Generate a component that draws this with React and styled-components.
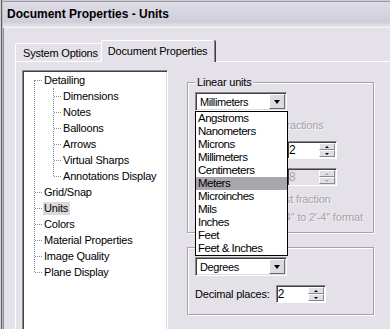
import React from 'react';
import styled, { createGlobalStyle } from 'styled-components';

const GlobalStyle = createGlobalStyle`
  html, body {
    margin: 0;
    padding: 0;
    height: 100%;
    overflow: hidden;
    background: #e5e1e8;
  }
  body {
    font-family: "Liberation Sans", Arial, sans-serif;
    font-size: 11px;
    letter-spacing: -0.2px;
    color: #000;
  }
`;

const Frame = styled.div`
  width: 390px;
  height: 329px;
  overflow: hidden;
  box-sizing: border-box;
  padding: 2px 0 0 3px;
  display: flex;
  flex-direction: column;
  background: #e5e1e8;
  box-shadow: inset 1px 0 #d2d0d6, inset 2px 0 #5f5d66, inset 3px 0 #bdbac1,
    inset 0 1px #d0ced4, inset 0 2px #9a98a0;
`;

const TitleBar = styled.div`
  flex-shrink: 0;
  height: 26px;
  box-sizing: border-box;
  display: flex;
  align-items: center;
  padding: 0 0 1px 4px;
  background: linear-gradient(#dedde7, #cfcdd9 80%, #e9e8ee);
  border-bottom: 1px solid #f4f3f6;
  font-size: 12px;
  font-weight: bold;
  letter-spacing: 0;
`;

const Body = styled.div`
  flex: 1 0 auto;
  display: flex;
  flex-direction: column;
  border-left: 1px solid #8d8a92;
  padding: 12px 0 0 11px;
`;

const TabRow = styled.div`
  flex-shrink: 0;
  display: flex;
  align-items: flex-end;
  height: 21px;
  position: relative;
  z-index: 1;
`;

const Tab = styled.div`
  box-sizing: border-box;
  height: ${p => (p.$active ? 22 : 18)}px;
  margin-bottom: ${p => (p.$active ? -1 : 0)}px;
  margin-left: ${p => (p.$active ? -2 : 0)}px;
  padding: 0 ${p => (p.$active ? '7px 2px 6px' : '4px 0 7px')};
  display: flex;
  align-items: center;
  white-space: nowrap;
  background: #e5e1e8;
  border-top: 1px solid #fff;
  border-left: 1px solid #fff;
  border-right: 1px solid ${p => (p.$active ? '#8a878f' : '#a9a6ad')};
  box-shadow: ${p => (p.$active ? '1px 0 #3f3d44' : 'none')};
  border-radius: 2px 2px 0 0;
`;

const TabPanel = styled.div`
  flex: 1 0 auto;
  display: flex;
  align-items: flex-start;
  padding: 8px 0 0 6px;
  border-top: 1px solid #fff;
  border-left: 1px solid #fff;
`;

const TreeBox = styled.div`
  width: 146px;
  height: 270px;
  flex-shrink: 0;
  box-sizing: border-box;
  background: #fff;
  border: 1px solid;
  border-color: #8a878f #fff #fff #8a878f;
  box-shadow: inset 1px 1px #404040, inset -1px -1px #dcd8e0;
`;

const TreeList = styled.ul`
  list-style: none;
  margin: 0;
  padding: 1px 0 0;
  position: relative;

  &::before {
    content: '';
    position: absolute;
    left: 11px;
    top: 9px;
    bottom: 8px;
    border-left: 1px dotted #8c8a90;
  }
`;

const SubList = styled.ul`
  list-style: none;
  margin: 0;
  padding: 0;
  position: relative;

  &::before {
    content: '';
    position: absolute;
    left: 30px;
    top: 0;
    bottom: 8px;
    border-left: 1px dotted #8c8a90;
  }
`;

const Row = styled.li`
  position: relative;
  height: 16px;
  line-height: 16px;
  white-space: nowrap;
  padding-left: ${p => (p.$level ? 40 : 21)}px;

  &::before {
    content: '';
    position: absolute;
    left: ${p => (p.$level ? 31 : 12)}px;
    width: 7px;
    top: 8px;
    border-top: 1px dotted #8c8a90;
  }
`;

const NodeLabel = styled.span`
  display: inline-block;
  line-height: 13px;
  padding: 0 2px 0 1px;
  margin-left: -1px;
  background: ${p => (p.$selected ? '#dcd8de' : 'transparent')};
`;

const RightCol = styled.div`
  margin-left: 19px;
  padding-top: 5px;
  width: 187px;
  display: flex;
  flex-direction: column;
`;

const Group = styled.fieldset`
  position: relative;
  margin: ${p => (p.$first ? 0 : '7px 0 0')};
  padding: 3px 0 ${p => p.$pb}px 7px;
  min-width: 0;
  border: 1px solid #a5a2a9;
  box-shadow: inset 1px 1px #fff, 1px 1px #fff;
`;

const Legend = styled.legend`
  padding: 0 2px;
  line-height: 14px;
  background: #e5e1e8;
`;

const FieldRow = styled.div`
  height: ${p => p.$h}px;
  display: flex;
  align-items: center;
  gap: ${p => p.$gap || 0}px;
  white-space: nowrap;
`;

const Select = styled.div`
  position: relative;
  width: 92px;
  height: 19px;
  box-sizing: border-box;
  display: flex;
  align-items: center;
  background: #fff;
  border: 1px solid;
  border-color: #8a878f #fff #fff #8a878f;
  box-shadow: inset 1px 1px #404040, inset -1px -1px #dcd8e0;
  padding: 0 1px 0 4px;
`;

const SelectText = styled.span`
  flex: 1;
  letter-spacing: -0.4px;
  font-size: 11px;
`;

const DropButton = styled.div`
  width: 16px;
  height: 15px;
  box-sizing: border-box;
  display: flex;
  align-items: center;
  justify-content: center;
  background: #dedae2;
  border: 1px solid;
  border-color: #fff #6c6a72 #6c6a72 #fff;

  &::after {
    content: '';
    border-left: 3.5px solid transparent;
    border-right: 3.5px solid transparent;
    border-top: 4px solid #000;
    margin-top: 1px;
  }
`;

const DropList = styled.ul`
  position: absolute;
  top: 18px;
  left: -1px;
  width: 93px;
  z-index: 10;
  box-sizing: border-box;
  margin: 0;
  padding: 0;
  list-style: none;
  background: #fff;
  border: 1px solid #000;
`;

const DropItem = styled.li`
  height: 13px;
  line-height: 13px;
  padding-left: 2px;
  font-size: 11.5px;
  letter-spacing: -0.5px;
  background: ${p => (p.$hot ? '#a9a6ae' : 'transparent')};
`;

const Label = styled.span`
  color: ${p => (p.$disabled ? '#a7a3aa' : '#000')};
  text-shadow: ${p => (p.$disabled ? '1px 1px #f4f2f5' : 'none')};
`;

const Option = styled.span`
  display: inline-flex;
  align-items: center;
  gap: 4px;
  width: ${p => p.$w || 'auto'};
`;

const RadioMark = styled.span`
  width: 11px;
  height: 11px;
  border-radius: 50%;
  box-sizing: border-box;
  border: 1px solid #8a878f;
  background: #e5e1e8;
`;

const CheckMark = styled.span`
  width: 13px;
  height: 13px;
  box-sizing: border-box;
  border: 1px solid;
  border-color: #8a878f #fff #fff #8a878f;
  background: #e5e1e8;
`;

const FieldLabel = styled.span`
  width: ${p => p.$w}px;
  flex-shrink: 0;
`;

const SpinBox = styled.div`
  width: 50px;
  height: 18px;
  box-sizing: border-box;
  display: flex;
  border: 1px solid;
  border-color: #8a878f #fff #fff #8a878f;
  box-shadow: inset 1px 1px #404040;
  background: ${p => (p.$disabled ? '#e5e1e8' : '#fff')};
`;

const SpinValue = styled.span`
  flex: 1;
  padding-left: 1px;
  line-height: 16px;
  font-size: 12px;
  color: ${p => (p.$disabled ? '#a7a3aa' : '#000')};
`;

const SpinButtons = styled.div`
  width: 16px;
  display: flex;
  flex-direction: column;
  padding: 1px 1px 1px 0;
`;

const SpinArrow = styled.div`
  flex: 1;
  display: flex;
  align-items: center;
  justify-content: center;
  background: #e2dee6;
  border: 1px solid;
  border-color: #fff #8a878f #8a878f #fff;

  &::after {
    content: '';
    border-left: 2px solid transparent;
    border-right: 2px solid transparent;
    ${p => (p.$down ? 'border-top' : 'border-bottom')}: 2px solid
      ${p => (p.$disabled ? '#a7a3aa' : '#000')};
  }
`;

const Spin = ({ value, disabled }) => (
  <SpinBox $disabled={disabled}>
    <SpinValue $disabled={disabled}>{value}</SpinValue>
    <SpinButtons>
      <SpinArrow $disabled={disabled} />
      <SpinArrow $down $disabled={disabled} />
    </SpinButtons>
  </SpinBox>
);

const details = ['Dimensions', 'Notes', 'Balloons', 'Arrows', 'Virtual Sharps', 'Annotations Display'];
const topLevel = ['Grid/Snap', 'Units', 'Colors', 'Material Properties', 'Image Quality', 'Plane Display'];
const units = [
  'Angstroms', 'Nanometers', 'Microns', 'Millimeters', 'Centimeters', 'Meters',
  'Microinches', 'Mils', 'Inches', 'Feet', 'Feet & Inches',
];

export default function App() {
  return (
    <>
      <GlobalStyle />
      <Frame>
        <TitleBar>Document Properties - Units</TitleBar>
        <Body>
          <TabRow>
            <Tab>System Options</Tab>
            <Tab $active>Document Properties</Tab>
          </TabRow>
          <TabPanel>
            <TreeBox>
              <TreeList>
                <Row><NodeLabel>Detailing</NodeLabel></Row>
                <SubList>
                  {details.map(d => (
                    <Row key={d} $level={1}><NodeLabel>{d}</NodeLabel></Row>
                  ))}
                </SubList>
                {topLevel.map(t => (
                  <Row key={t}>
                    <NodeLabel $selected={t === 'Units'}>{t}</NodeLabel>
                  </Row>
                ))}
              </TreeList>
            </TreeBox>

            <RightCol>
              <Group $first $pb={4}>
                <Legend>Linear units</Legend>
                <FieldRow $h={19}>
                  <Select>
                    <SelectText>Millimeters</SelectText>
                    <DropButton />
                    <DropList>
                      {units.map(u => (
                        <DropItem key={u} $hot={u === 'Meters'}>{u}</DropItem>
                      ))}
                    </DropList>
                  </Select>
                </FieldRow>
                <FieldRow $h={27}>
                  <Option $w="70px"><RadioMark /><Label>Decimal</Label></Option>
                  <Option><RadioMark /><Label $disabled>Fractions</Label></Option>
                </FieldRow>
                <FieldRow $h={24}>
                  <FieldLabel $w={92}>Decimal places:</FieldLabel>
                  <Spin value="2" />
                </FieldRow>
                <FieldRow $h={30}>
                  <FieldLabel $w={92}><Label $disabled>Denominator:</Label></FieldLabel>
                  <Spin value="8" disabled />
                </FieldRow>
                <FieldRow $h={14}>
                  <Option><CheckMark /><Label $disabled>Round to nearest fraction</Label></Option>
                </FieldRow>
                <FieldRow $h={22}>
                  <Option><CheckMark /><Label $disabled>Convert from 2.4'' to 2'-4'' format</Label></Option>
                </FieldRow>
              </Group>

              <Group $pb={2}>
                <Legend>Angular units</Legend>
                <FieldRow $h={19}>
                  <Select>
                    <SelectText>Degrees</SelectText>
                    <DropButton />
                  </Select>
                </FieldRow>
                <FieldRow $h={36} $gap={6}>
                  <span>Decimal places:</span>
                  <Spin value="2" />
                </FieldRow>
              </Group>
            </RightCol>
          </TabPanel>
        </Body>
      </Frame>
    </>
  );
}
